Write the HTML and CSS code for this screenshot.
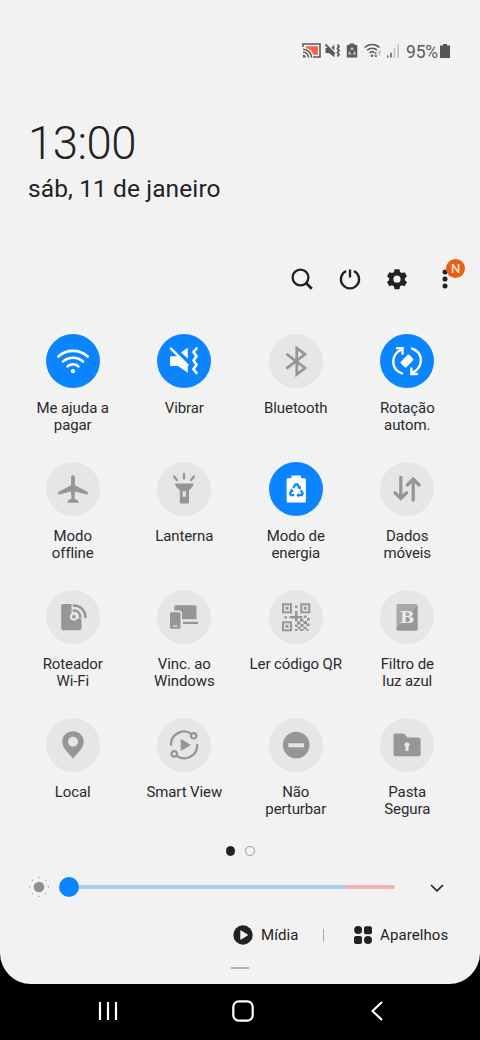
FILE: index.html
```html
<!DOCTYPE html>
<html lang="pt-BR">
<head>
<meta charset="utf-8">
<title>Painel rápido</title>
<link rel="stylesheet" href="styles.css">
</head>
<body>
<main class="panel">
  <header class="status">
    <svg class="status-icons" viewBox="0 0 101 18" width="101" height="18">
      <path d="M1 5V2h17v13h-7" fill="none" stroke="#5a5a5a" stroke-width="1.6"/>
      <path d="M4 4.2h12v8.6h-5C10.500 9.500 8 6.800 4 6.300z" fill="#fb6249"/>
      <path d="M1 7.200a8.500 8.500 0 0 1 8.500 8.300M1 10.100a5.500 5.500 0 0 1 5.500 5.400" fill="none" stroke="#5a5a5a" stroke-width="1.500"/>
      <path d="M1 12.800a2.800 2.800 0 0 1 2.800 2.800H1z" fill="#5a5a5a"/>
      <g transform="translate(-1 0)">
        <path d="M24.500 6h3.300l5.500 5.800v3.400L28 11h-3.500zM30.500 5.500l2.800-3v6z" fill="#5a5a5a"/>
        <path d="M24.500 2.500l9.300 9.300M36.500 2.500l1.500 2-1.500 2 1.500 2-1.500 2 1.500 2-1.500 2" fill="none" stroke="#5a5a5a" stroke-width="1.800"/>
      </g>
      <path d="M47.500 1.500h5V3h2.800v12.500H44.800V3h2.700z" fill="#5a5a5a"/>
      <path d="M48.300 8.200L50 5.700l1.700 2.500M47.700 9.500L46.800 12h2.500M52.400 9.500l.9 2.500h-2.500" fill="none" stroke="#f2f2f2" stroke-width=".9"/>
      <g transform="translate(-2.500 0)">
        <path d="M65 5.500c4.500-4 11-4 15 0M67.500 8.300c3-2.800 7.500-2.800 10 0M70 11c1.700-1.500 3.500-1.500 5 0" fill="none" stroke="#5a5a5a" stroke-width="1.500"/>
        <circle cx="72.500" cy="13.800" r="1.300" fill="#5a5a5a"/>
        <path d="M76.300 10v5m-1.300-1.500l1.300 1.500 1.300-1.500" fill="none" stroke="#666"/>
        <path d="M80 13.500V9m-1.500 1.500L80 9l1.500 1.500" fill="none" stroke="#aaa" stroke-width=".9"/>
        <path d="M88.300 15.500v-2M91.500 15.500v-4.800" stroke="#5a5a5a" stroke-width="1.500"/>
        <path d="M95 15.500V6.500M98.700 15.500v-13" stroke="#bcbcbc" stroke-width="1.500"/>
      </g>
    </svg>
    <span class="battery-text">95%</span>
    <svg viewBox="0 0 10 14" width="10" height="14"><path d="M3 0h4v1.500h3V14H0V1.500h3z" fill="#555"/></svg>
  </header>

  <section class="clock">
    <div class="time">13:00</div>
    <div class="date">sáb, 11 de janeiro</div>
  </section>

  <nav class="tools">
    <svg viewBox="0 0 24 24"><circle cx="10.500" cy="10.500" r="7.900"/><path d="M16 16l5.800 5.800" stroke-width="2.800"/></svg>
    <svg viewBox="0 0 24 24"><path d="M8.100 4A9.100 9.100 0 1 0 15.900 4M12 2.500v8"/></svg>
    <svg viewBox="0 0 24 24"><path fill="#222225" stroke="none" fill-rule="evenodd" d="M9.600 2.200h4.800l.6 2.800 1.900 1.100 2.700-.9 2.400 4.100-2.100 1.900v2l2.100 1.900-2.400 4.100-2.700-.9L15 19.400l-.6 2.800H9.600L9 19.400l-1.900-1.100-2.700.9L2 15.100l2.100-1.900v-2L2 9.300l2.400-4.100 2.700.9L9 5zM12 8.600a3.600 3.600 0 1 0 0 7.200 3.600 3.600 0 0 0 0-7.200z"/></svg>
    <div class="more">
      <svg viewBox="0 0 24 24"><g fill="#222225" stroke="none"><circle cx="12" cy="5.100" r="2.500"/><circle cx="12" cy="12" r="2.500"/><circle cx="12" cy="19" r="2.500"/></g></svg>
      <span class="badge">N</span>
    </div>
  </nav>

  <section class="tiles">
    <div class="tile on"><svg class="ic" viewBox="0 0 54 54">
      <path class="s" stroke-width="2.600" d="M12.300 22.500c8.500-7.500 20.900-7.500 29.400 0M17 27.500c5.800-5.100 14.200-5.100 20 0M21.700 32.300c3.200-2.700 7.400-2.700 10.600 0"/><circle class="f" cx="27" cy="37.200" r="2.100"/></svg>
      <span>Me ajuda a<br>pagar</span></div>
    <div class="tile on"><svg class="ic" viewBox="0 0 54 54">
      <path class="f" d="M14 22.300h6.300L30.800 32v6.800L21 32h-7q-1 0-1-1v-7.700q0-1 1-1zM24 18.400l6.800-4.600V24.500z"/><path class="s" stroke-width="2.400" stroke-linecap="butt" d="M14 14.700l16.500 16.500"/><path class="s" stroke-width="2.600" d="M39.500 14.500l-3 3.500 3 4.300-3 4.300 3 4.200-3 4.300 3 3.900"/></svg>
      <span>Vibrar</span></div>
    <div class="tile"><svg class="ic" viewBox="0 0 54 54">
      <path class="s" stroke-width="2.800" d="M18.200 20.500L36 34l-8.200 6.300V14L36 20.300 18.200 33.800"/></svg>
      <span>Bluetooth</span></div>
    <div class="tile on"><svg class="ic" viewBox="0 0 54 54">
      <path class="s" stroke-width="2.400" d="M22 39.400C10.500 35.500 10.300 21 21.500 15.500M17 14.200h5.600v5.600M32 14.500c11.500 4 11.800 18.500.500 24.300M37 40h-5.600v-5.600"/><rect class="f" x="21" y="23.100" width="12" height="7.800" rx="1.200" transform="rotate(-45 27 27)"/></svg>
      <span>Rotação<br>autom.</span></div>

    <div class="tile"><svg class="ic" viewBox="0 0 54 54">
      <path class="f" d="M27 13.200c1.200 0 1.900 1 1.900 2.600v7.400l12 6.200q.8.500.8 1.300v2.100l-12.600-3.300-.7 6.700 4 2.700v1.800H21.600v-1.800l4-2.700-.7-6.700-12.600 3.300v-2.100q0-.8.800-1.300l12-6.200v-7.400c0-1.600.7-2.600 1.900-2.600z"/></svg>
      <span>Modo<br>offline</span></div>
    <div class="tile"><svg class="ic" viewBox="0 0 54 54">
      <path class="f" fill-rule="evenodd" d="M18.400 21.400h17.400q.9 0 .7.900-1.200 4.200-4.500 5.700v12.500q0 1-1 1h-7.200q-1 0-1-1V28q-3.300-1.500-4.900-5.700-.2-.9.500-.9zM25.700 29.300v5.500h3.100v-5.500z"/><path class="s" stroke-width="2.300" stroke-linecap="butt" d="M27 12v4.600M17 14.600l3 3.500M37 14.600l-3 3.500"/></svg>
      <span>Lanterna</span></div>
    <div class="tile on"><svg class="ic" viewBox="0 0 54 54">
      <path class="f" d="M22.500 13.500h9.500v2.800h3.700q1.200 0 1.200 1.200v21.800q0 1.200-1.200 1.200H18.800q-1.200 0-1.200-1.200V17.500q0-1.200 1.200-1.200h3.700z"/><path class="cut" d="M24.200 26l2.200-3.700h1.900l2.100 3.400M22.800 28.400L21 31.400l.9 1.700h3.300M31.900 28.400l1.800 3-.9 1.700h-3.500"/><path fill="#0b84ff" d="M31.900 23.800v4l-3.400-1.900zM21 29.500l1.900-3.300 2 3.500zM30 31v4.400l-2.800-2.200z"/></svg>
      <span>Modo de<br>energia</span></div>
    <div class="tile"><svg class="ic" viewBox="0 0 54 54">
      <path class="s" stroke-width="3.300" stroke-linecap="butt" d="M20.800 15.500v20M15 30.700l5.800 5.700 5.800-5.700M33.200 38.200V18M27.300 23l5.900-5.900 5.900 5.900"/></svg>
      <span>Dados<br>móveis</span></div>

    <div class="tile"><svg class="ic" viewBox="0 0 54 54">
      <path class="f" d="M17 14h8.500v9.200a4.200 4.200 0 1 0 6.200 5.300H35.500v10q0 1.800-1.800 1.800H17q-1.800 0-1.800-1.800V15.800Q15.200 14 17 14z"/><circle class="f" cx="27.800" cy="26.800" r="1.700"/><path class="s" stroke-width="2.500" stroke-linecap="butt" d="M27.800 20.500c3.900 0 6.400 2.800 6.400 6.500M27.800 15.500c6.700 0 11.600 4.900 11.600 11.500"/></svg>
      <span>Roteador<br>Wi-Fi</span></div>
    <div class="tile"><svg class="ic" viewBox="0 0 54 54">
      <path class="f" d="M18.500 15.200h19.700q1.300 0 1.300 1.300v12.700H25v-5.800q0-3-3-3h-4.700v-4q0-1.200 1.200-1.200zM26 31.700h15v2.300H26z"/><rect class="f" x="13" y="22.300" width="10.500" height="16.500" rx="1.500"/><path stroke="#e5e5e5" stroke-width="1.200" d="M16 36.200h4.500"/></svg>
      <span>Vinc. ao<br>Windows</span></div>
    <div class="tile"><svg class="ic" viewBox="0 0 54 54">
      <g fill="none" stroke="#969696" stroke-width="2"><rect x="14" y="14.300" width="8" height="8"/><rect x="32.300" y="14.300" width="8" height="8"/><rect x="14" y="32.300" width="8" height="8"/></g>
      <path class="f" d="M16.500 16.800h3v3h-3zM34.800 16.800h3v3h-3zM16.500 34.800h3v3h-3zM26 15.500h2.500V18H26zM15.500 26H18v2.400h-2.500zM20.500 26H26v-5h2.500v5h5v2.500h-5v3H26v-3h-5.500zM35 25.500h2.500V28H35zM38 28h3v2.500h-3zM31 29h3.500v2.500H31zM34.500 31H38v3h-3.500zM28 31.500h3.500v3H28zM26 34.500h2.500V37H26zM31.500 34h3v3h-3zM37.500 33.500h3V36h-3zM34.500 36.700h3v2.500h-3zM28.500 36.700h3v2.500h-3zM26 39h2.500v2H26zM31 39h3.500v2H31zM37.500 39h2v2h-2z"/></svg>
      <span>Ler código QR</span></div>
    <div class="tile"><svg class="ic" viewBox="0 0 54 54">
      <rect fill="#a8a8a8" x="16.500" y="14" width="21" height="26.500" rx="1.500"/><path class="f" d="M37.500 15.500v23.500q0 1.500-1.500 1.500H18q-1.500 0-1.500-1.500v-1z"/><text x="27.200" y="33.200" class="letter">B</text></svg>
      <span>Filtro de<br>luz azul</span></div>

    <div class="tile"><svg class="ic" viewBox="0 0 54 54">
      <path class="f" fill-rule="evenodd" d="M27 13.200c6 0 10.700 4.500 10.700 10.600 0 7-7.200 11.900-10.700 17-3.500-5.100-10.700-10-10.700-17 0-6.100 4.700-10.600 10.700-10.600zm0 5.600a5 5 0 1 0 0 10 5 5 0 0 0 0-10z"/></svg>
      <span>Local</span></div>
    <div class="tile"><svg class="ic" viewBox="0 0 54 54">
      <path class="s" stroke-width="2.300" stroke-linecap="butt" d="M14 26.800A13 13 0 0 1 34.200 15.700M40.200 27A13 13 0 0 1 19.700 37.900"/><circle class="s" stroke-width="2.200" cx="36.700" cy="17.800" r="2.700"/><circle class="s" stroke-width="2.200" cx="17.300" cy="35.900" r="2.700"/><path class="f" d="M23.700 21.800q0-1 .9-.5l8.600 5.100q.7.500 0 1l-8.600 5.200q-.9.500-.9-.5z"/></svg>
      <span>Smart View</span></div>
    <div class="tile"><svg class="ic" viewBox="0 0 54 54">
      <circle class="f" cx="27.200" cy="27" r="13.300"/><path fill="#e5e5e5" d="M19.300 25.200h15.600v4H19.300z"/></svg>
      <span>Não<br>perturbar</span></div>
    <div class="tile"><svg class="ic" viewBox="0 0 54 54">
      <path class="f" d="M15.200 15.500h8.200q.7 0 1.100.5l3 3.400h11.400q1.700 0 1.700 1.700v15.500q0 1.700-1.700 1.700H15.200q-1.700 0-1.700-1.700V17.200q0-1.700 1.700-1.700z"/><path fill="#e5e5e5" d="M27 24.300a2.600 2.600 0 0 1 1.500 4.700V33h-3v-4a2.600 2.600 0 0 1 1.500-4.700z"/></svg>
      <span>Pasta<br>Segura</span></div>
  </section>

  <div class="pager"><i class="dot current"></i><i class="dot"></i></div>

  <section class="brightness">
    <svg viewBox="0 0 22 22" width="22" height="22"><circle cx="11" cy="11" r="5.300" fill="#909090"/><g fill="#999"><circle cx="11" cy="1.500" r=".7"/><circle cx="11" cy="20.500" r=".7"/><circle cx="1.500" cy="11" r=".7"/><circle cx="20.500" cy="11" r=".7"/><circle cx="4.300" cy="4.300" r=".7"/><circle cx="17.700" cy="4.300" r=".7"/><circle cx="4.300" cy="17.700" r=".7"/><circle cx="17.700" cy="17.700" r=".7"/></g></svg>
    <div class="slider"><i class="knob"></i><i class="track"></i><i class="track high"></i></div>
    <svg class="chevron" viewBox="0 0 14 8" width="14" height="8"><path d="M1 1l6 5.800L13 1" fill="none" stroke="#222225" stroke-width="1.700"/></svg>
  </section>

  <footer class="links">
    <svg viewBox="0 0 20 20" width="20" height="20"><circle cx="10" cy="10" r="9.700" fill="#222225"/><path d="M7.300 6q0-1 .9-.5l6.400 4q.7.500 0 1l-6.400 4q-.9.500-.9-.5z" fill="#f2f2f2"/></svg>
    <span class="media">Mídia</span>
    <i class="divider"></i>
    <svg viewBox="0 0 18 18" width="18" height="18" fill="#222225"><circle cx="4.100" cy="4.100" r="4"/><rect x="10" y=".2" width="8" height="8" rx="2"/><rect x="0" y="10" width="8" height="8" rx="2"/><circle cx="14" cy="14" r="4"/></svg>
    <span class="devices">Aparelhos</span>
  </footer>
  <i class="handle"></i>
</main>
<nav class="navbar">
  <svg viewBox="0 0 20 20" width="20" height="20"><path d="M2 1v18M10 1v18M18 1v18"/></svg>
  <svg viewBox="0 0 22 22" width="22" height="22"><rect x="1.300" y="1.300" width="19.400" height="19.400" rx="5.500"/></svg>
  <svg viewBox="0 0 12 20" width="12" height="20"><path d="M11 1l-9.500 9L11 19"/></svg>
</nav>
</body>
</html>
```
FILE: styles.css
```css
* { box-sizing: border-box; }
body {
  margin: 0;
  width: 480px;
  height: 1040px;
  overflow: hidden;
  background: #000;
  color: #222225;
  font-family: Roboto, sans-serif;
}
svg { display: block; flex: none; }
.panel {
  display: flex;
  flex-direction: column;
  height: 984px;
  background: #f2f2f3;
  border-radius: 0 0 31px 31px;
}
.status {
  display: flex;
  align-items: center;
  height: 18px;
  margin-top: 42px;
  padding-left: 302px;
}
.battery-text {
  width: 34px;
  margin: 1px 0 0 3px;
  color: #5a5a5a;
  font-size: 17.5px;
  line-height: 18px;
  letter-spacing: -.2px;
}
.clock { height: 147px; margin-top: 60px; padding-left: 28px; }
.time {
  height: 54px;
  font-size: 45.5px;
  font-weight: 300;
  line-height: 47px;
  letter-spacing: -.5px;
}
.date { font-size: 24.5px; line-height: 30px; letter-spacing: .1px; }
.tools {
  display: flex;
  gap: 23.700px;
  height: 24px;
  padding-left: 290px;
}
.tools svg {
  width: 24px;
  height: 24px;
  fill: none;
  stroke: #222225;
  stroke-width: 2.300;
}
.more { position: relative; }
.badge {
  position: absolute;
  top: -8px;
  left: 13px;
  width: 19px;
  height: 19px;
  border-radius: 50%;
  background: #e9600f;
  color: #fff;
  font-size: 13px;
  line-height: 19px;
  text-align: center;
}
.tiles {
  display: grid;
  grid-template-columns: repeat(4, 111.5px);
  grid-auto-rows: 128px;
  margin: 43px 17px 0;
}
.tile {
  display: flex;
  flex-direction: column;
  align-items: center;
  gap: 11.5px;
  color: #969696;
}
.tile span {
  color: #2b2b2e;
  font-size: 15px;
  line-height: 17.5px;
  letter-spacing: -.1px;
  text-align: center;
  white-space: nowrap;
}
.ic {
  width: 54px;
  height: 54px;
  border-radius: 50%;
  background: #e6e6e7;
}
.on { color: #fff; }
.on .ic { background: #0b84ff; }
.f { fill: currentColor; }
.s {
  fill: none;
  stroke: currentColor;
  stroke-linecap: round;
}
.cut { fill: none; stroke: #0b84ff; stroke-width: 2.200; }
.letter {
  fill: #e9e9e9;
  font: bold 18px "DejaVu Serif", serif;
  font-size: 17px;
  text-anchor: middle;
}
.pager {
  display: flex;
  justify-content: center;
  gap: 10px;
  height: 10px;
}
.dot {
  width: 9.500px;
  height: 9.500px;
  border: 1.500px solid #98989b;
  border-radius: 50%;
}
.current { background: #222225; border-color: #222225; }
.brightness {
  display: flex;
  align-items: center;
  height: 22px;
  margin-top: 20px;
  padding-left: 28px;
}
.slider {
  display: flex;
  align-items: center;
  width: 336px;
  margin: 0 35px 1px 9px;
}
.knob {
  width: 20px;
  height: 20px;
  border-radius: 50%;
  background: #0b84ff;
}
.track { width: 265px; height: 4px; background: #a6cff1; }
.high { width: 51px; border-radius: 0 2px 2px 0; background: #f0b3b3; }
.chevron { margin-top: 2px; }
.links {
  display: flex;
  align-items: center;
  height: 22px;
  margin-top: 26px;
  padding-left: 233px;
  font-size: 15px;
  letter-spacing: .1px;
}
.media { width: 62px; margin-left: 8px; }
.divider { width: 1px; height: 13px; margin-right: 30px; background: #aaa; }
.devices { margin-left: 8px; }
.handle { width: 18px; height: 2px; margin: 21px 0 0 231px; background: #b3b3b5; }
.navbar {
  display: flex;
  align-items: center;
  height: 54px;
  padding-left: 98px;
}
.navbar svg { fill: none; stroke: #fff; stroke-width: 2.200; }
.navbar svg + svg { margin-left: 114px; }
.navbar svg:last-child { margin-left: 117px; }
```
